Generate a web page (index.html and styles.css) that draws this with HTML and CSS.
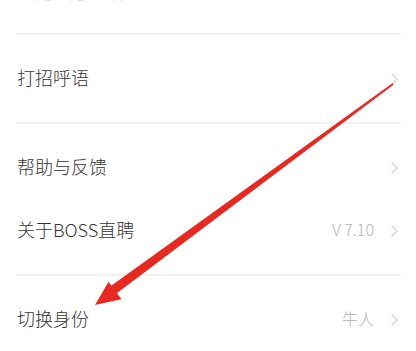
FILE: index.html
```html
<!DOCTYPE html>
<html lang="zh-CN">
<head>
<meta charset="utf-8">
<link rel="stylesheet" href="styles.css">
</head>
<body>
<div class="page">
  <div class="section section-top">
    <div class="row"><span class="label faint">通用</span><span class="label faint gap">隐私设置</span></div>
  </div>
  <div class="divider"></div>
  <div class="section">
    <div class="row"><span class="label">打招呼语</span><span class="right"><span class="chev"></span></span></div>
  </div>
  <div class="divider"></div>
  <div class="section">
    <div class="row"><span class="label">帮助与反馈</span><span class="right"><span class="chev"></span></span></div>
    <div class="row"><span class="label">关于BOSS直聘</span><span class="right"><span class="value">V 7.10</span><span class="chev"></span></span></div>
  </div>
  <div class="divider"></div>
  <div class="section">
    <div class="row"><span class="label">切换身份</span><span class="right"><span class="value">牛人</span><span class="chev"></span></span></div>
  </div>
  <svg class="arrow" width="416" height="351" viewBox="0 0 416 351" xmlns="http://www.w3.org/2000/svg">
    <polygon points="393.6,84.8 392.4,83.2 110.2,286.5 115.8,294.1" fill="#e62a22"/>
    <polygon points="95,305 108.5,281.8 121.5,299.2" fill="#e62a22"/>
  </svg>
</div>
</body>
</html>
```

FILE: styles.css
```css
html, body {
  margin: 0;
  padding: 0;
  background: #ffffff;
}
.page {
  position: relative;
  width: 416px;
  height: 351px;
  overflow: hidden;
  font-family: "Noto Sans CJK SC", "Noto Sans", sans-serif;
}
.section {
  padding: 12px 0;
}
.section-top {
  margin-top: -39px;
  padding: 0 0 9px 0;
}
.section:nth-of-type(2) {
  padding: 11px 0;
}
.row {
  box-sizing: border-box;
  height: 63px;
  display: flex;
  align-items: center;
  justify-content: space-between;
  padding: 0 16px 3px 17px;
}
.label {
  font-size: 18px;
  font-weight: 300;
  color: #333333;
}
.faint {
  color: #d4d4d4;
}
.gap {
  margin-left: 16px;
  margin-right: auto;
}
.right {
  display: flex;
  align-items: center;
  gap: 14px;
}
.value {
  font-size: 16px;
  font-weight: 300;
  color: #b4b4b4;
}
.chev {
  display: block;
  width: 7px;
  height: 7px;
  border-top: 1.5px solid #c9c9c9;
  border-right: 1.5px solid #c9c9c9;
  transform: rotate(45deg);
  margin-right: 4px;
  margin-top: 3px;
}
.divider {
  height: 2px;
  margin: 0 15px 0 16px;
  background: #f2f2f2;
}
.arrow {
  position: absolute;
  left: 0;
  top: 0;
}
```
